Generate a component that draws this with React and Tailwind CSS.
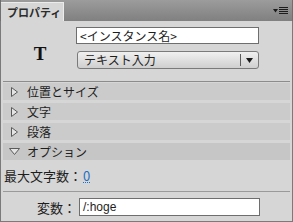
import React from 'react';

const FONT = { fontFamily: '"Noto Sans CJK JP", "Liberation Sans", sans-serif' };

const SECTIONS = [
  { label: '位置とサイズ', open: false },
  { label: '文字', open: false },
  { label: '段落', open: false },
  { label: 'オプション', open: true },
];

const Arrow = ({ open }) =>
  open ? (
    <svg width="11" height="8" viewBox="0 0 11 8" className="ml-[6px] mr-[7px]">
      <path d="M0.5 0.5 H10.5 L5.5 6.5 Z" fill="#e4e4e4" stroke="#5a5a5a" strokeWidth="1" />
    </svg>
  ) : (
    <svg width="7" height="10" viewBox="0 0 7 10" className="ml-[8px] mr-[9px]">
      <path d="M0.5 0.5 L6.5 5 L0.5 9.5 Z" fill="#e4e4e4" stroke="#5a5a5a" strokeWidth="1" />
    </svg>
  );

export default function App() {
  return (
    <div className="w-[293px] h-[222px] bg-[#d6d6d6] text-[12px] text-[#1e1e1e] flex flex-col overflow-hidden" style={FONT}>
      {/* タブバー */}
      <div className="h-[21px] flex items-end bg-gradient-to-b from-[#9c9c9c] to-[#808080] border-x border-[#6f6f6f] shrink-0">
        <div className="h-[19px] w-[63px] bg-[#d6d6d6] border-t border-r border-[#ececec] flex items-center pl-[6px] text-[11px] font-bold text-[#2c2c2c] leading-none whitespace-nowrap">
          プロパティ
        </div>
        <div className="flex-1" />
        <div className="flex items-center gap-[1px] mb-[6px] mr-[4px]">
          <svg width="5" height="4" viewBox="0 0 5 4">
            <path d="M0 0 H5 L2.5 3.5 Z" fill="#1c1c1c" />
          </svg>
          <svg width="9" height="8" viewBox="0 0 9 8">
            <rect x="0" y="0" width="9" height="1" fill="#1c1c1c" />
            <rect x="0" y="2" width="9" height="1" fill="#1c1c1c" />
            <rect x="0" y="4" width="9" height="1" fill="#1c1c1c" />
            <rect x="0" y="6" width="9" height="1" fill="#1c1c1c" />
          </svg>
        </div>
      </div>

      <div className="flex-1 flex flex-col border-x border-b border-[#7a7a7a]">
        {/* インスタンス */}
        <div className="flex h-[60px]">
          <div className="w-[75px] flex items-center justify-center pl-[3px] pt-[4px]">
            <span className="text-[19px] font-bold leading-none text-[#111]" style={{ fontFamily: '"Liberation Serif", serif' }}>T</span>
          </div>
          <div className="flex flex-col pt-[6px] gap-[7px]">
            <div className="w-[183px] h-[17px] bg-white border border-[#6e6e6e] flex items-center px-[3px] leading-none">
              &lt;インスタンス名&gt;
            </div>
            <div className="w-[182px] h-[18px] ml-[1px] rounded-[3px] border border-[#7a7a7a] bg-gradient-to-b from-[#f0f0f0] to-[#cfcfcf] flex items-center leading-none">
              <span className="flex-1 pl-[6px]">テキスト入力</span>
              <span className="w-[1px] h-[12px] bg-[#5a5a5a]" />
              <span className="w-[17px] flex justify-center">
                <svg width="7" height="5" viewBox="0 0 7 5">
                  <path d="M0 0 H7 L3.5 5 Z" fill="#1a1a1a" />
                </svg>
              </span>
            </div>
          </div>
        </div>

        <div className="h-[1px] mx-[2px] bg-[#8c8c8c]" />

        {/* セクション */}
        <div className="flex flex-col gap-[3px] mt-[1px] mx-[2px]">
          {SECTIONS.map((s) => (
            <div key={s.label} className={`h-[17px] flex items-center leading-none ${s.open ? 'bg-[#c6c6c6]' : 'bg-[#cbcbcb]'}`}>
              <Arrow open={s.open} />
              <span>{s.label}</span>
            </div>
          ))}
        </div>

        {/* 最大文字数 */}
        <div className="h-[31px] flex items-center pl-[3px] text-[13px] leading-none">
          <span>最大文字数：</span>
          <span className="text-[#1f6fc5] border-b border-dotted border-[#1f6fc5] ml-[1px]">0</span>
        </div>

        <div className="h-[1px] mx-[2px] bg-[#9a9a9a]" />

        {/* 変数 */}
        <div className="flex items-center pt-[6px]">
          <span className="w-[78px] text-right text-[13px] pr-[3px] leading-none">変数：</span>
          <div className="w-[181px] h-[18px] bg-white border border-[#6e6e6e] flex items-center px-[3px] leading-none" style={{ fontFamily: '"Liberation Sans", sans-serif' }}>
            /:hoge
          </div>
        </div>
      </div>
    </div>
  );
}
